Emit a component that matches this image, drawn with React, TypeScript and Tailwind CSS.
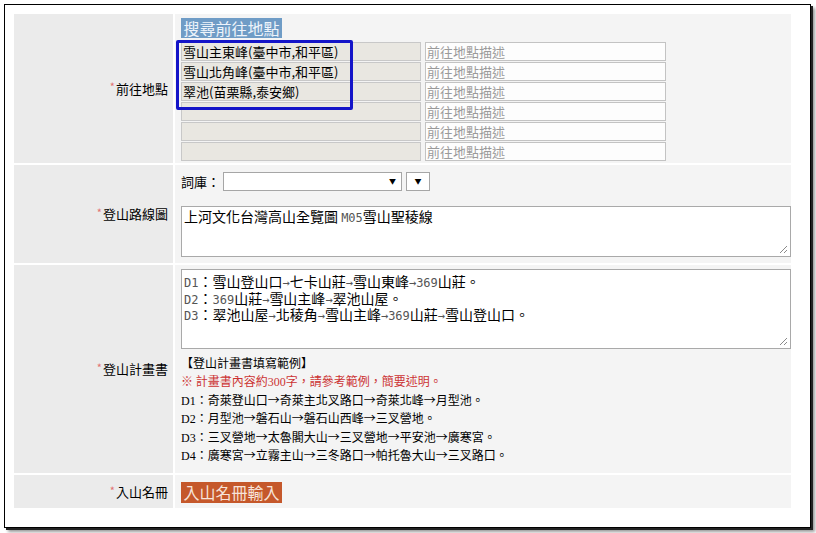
import React from 'react';

const cjk = { fontFamily: '"Noto Sans CJK TC", "Noto Sans", sans-serif' };

// latin bits inside the text boxes render in a thin grey mono face
function Mixed({ t }: { t: string }) {
  const parts = t.split(/([A-Za-z0-9→]+)/);
  return (
    <>
      {parts.map((p, i) =>
        /^[A-Za-z0-9→]+$/.test(p) ? (
          <span key={i} className="text-[12px] text-[#555]" style={{ fontFamily: '"DejaVu Sans Mono", monospace' }}>
            {p}
          </span>
        ) : (
          <span key={i}>{p}</span>
        )
      )}
    </>
  );
}

function Serif({ t }: { t: string }) {
  const parts = t.split(/([A-Za-z0-9]+)/);
  return (
    <>
      {parts.map((p, i) =>
        /^[A-Za-z0-9]+$/.test(p) ? (
          <span key={i} style={{ fontFamily: '"Liberation Serif", serif' }}>
            {p}
          </span>
        ) : (
          <span key={i}>{p}</span>
        )
      )}
    </>
  );
}

function Grip() {
  return (
    <svg className="absolute right-[2px] bottom-[2px]" width="9" height="9" viewBox="0 0 9 9">
      <path d="M1 8 L8 1 M5 8 L8 5" stroke="#8a8a8a" strokeWidth="1" />
    </svg>
  );
}

function Label({ text }: { text: string }) {
  return (
    <div className="bg-[#ebebeb] flex items-center justify-end pr-[5px] text-[13px] text-black">
      <span className="text-[11px] text-[#e27272] relative -top-[2px] mr-[1px]">*</span>
      {text}
    </div>
  );
}

const places = ['雪山主東峰(臺中市,和平區)', '雪山北角峰(臺中市,和平區)', '翠池(苗栗縣,泰安鄉)', '', '', ''];

const plan = [
  'D1：雪山登山口→七卡山莊→雪山東峰→369山莊。',
  'D2：369山莊→雪山主峰→翠池山屋。',
  'D3：翠池山屋→北稜角→雪山主峰→369山莊→雪山登山口。',
];

const sample = [
  'D1：奇萊登山口→奇萊主北叉路口→奇萊北峰→月型池。',
  'D2：月型池→磐石山→磐石山西峰→三叉營地。',
  'D3：三叉營地→太魯閣大山→三叉營地→平安池→廣寒宮。',
  'D4：廣寒宮→立霧主山→三冬路口→帕托魯大山→三叉路口。',
];

export default function App() {
  return (
    <div className="w-[816px] h-[533px] bg-white pt-[4px] pl-[4px]" style={cjk}>
      <div className="w-[807px] h-[524px] border border-black bg-white pl-[9px] pt-[9px] shadow-[2px_2px_0_#222,4px_4px_3px_#999]">
        <div className="w-[777px] grid grid-cols-[159px_616px] gap-[2px]">
          {/* 前往地點 */}
          <Label text="前往地點" />
          <div className="bg-[#f4f4f4] relative pl-[6px] pt-[4px] pb-[2px]">
            <div className="w-[101px] h-[20px] bg-[#6f9cc6] text-[16px] leading-[20px] text-center text-[#eef4fb]">
              搜尋前往地點
            </div>
            <div className="mt-[4px] flex flex-col gap-px">
              {places.map((p, i) => (
                <div key={i} className="flex gap-[4px]">
                  <div className="w-[240px] h-[19px] border border-[#c8c8c8] bg-[#e9e7e1] text-[13px] leading-[17px] px-[1px] text-black whitespace-nowrap overflow-hidden">
                    {p}
                  </div>
                  <div className="w-[241px] h-[19px] border border-[#c3c3c3] bg-[#fdfdfd] text-[13px] leading-[17px] px-[1px] text-[#9a9a9a]">
                    前往地點描述
                  </div>
                </div>
              ))}
            </div>
            <div className="absolute left-[1px] top-[26px] w-[177px] h-[70px] border-[3px] border-[#1414c8] rounded-[2px]" />
          </div>

          {/* 登山路線圖 */}
          <Label text="登山路線圖" />
          <div className="bg-[#f4f4f4] pl-[6px] pt-[7px] pb-[6px]">
            <div className="flex items-center h-[19px] text-[13px] text-black">
              <span className="w-[42px]">詞庫：</span>
              <div className="w-[179px] h-[19px] border border-[#a6a6a6] bg-white flex items-center justify-end pr-[5px]">
                <span className="text-[7px] leading-none">▼</span>
              </div>
              <div className="ml-[4px] w-[24px] h-[19px] border border-[#a6a6a6] bg-white flex items-center justify-center">
                <span className="text-[7px] leading-none">▼</span>
              </div>
            </div>
            <div className="relative mt-[15px] w-[610px] h-[51px] border border-[#a9a9a9] bg-white px-[2px] pt-[1px] text-[14px] leading-[16.5px] text-black">
              <div className="h-[16.5px] whitespace-nowrap">
                <Mixed t="上河文化台灣高山全覽圖 M05雪山聖稜線" />
              </div>
              <Grip />
            </div>
          </div>

          {/* 登山計畫書 */}
          <Label text="登山計畫書" />
          <div className="bg-[#f4f4f4] pl-[6px] pt-[4px] pb-[9px]">
            <div className="relative w-[610px] h-[80px] border border-[#a9a9a9] bg-white px-[2px] pt-[3px] text-[14px] leading-[16.5px] text-black">
              {plan.map((l, i) => (
                <div key={i} className="h-[16.5px] whitespace-nowrap">
                  <Mixed t={l} />
                </div>
              ))}
              <Grip />
            </div>
            <div className="mt-[5px] text-[12px] leading-[18.4px] text-black">
              <div className="h-[18.4px]">【登山計畫書填寫範例】</div>
              <div className="h-[18.4px] text-[#cc3333]">
                <Serif t="※ 計畫書內容約300字，請參考範例，簡要述明。" />
              </div>
              {sample.map((l, i) => (
                <div key={i} className="h-[18.4px] whitespace-nowrap">
                  <Serif t={l} />
                </div>
              ))}
            </div>
          </div>

          {/* 入山名冊 */}
          <Label text="入山名冊" />
          <div className="bg-[#f4f4f4] pl-[6px] pt-[7px] pb-[5px]">
            <div className="w-[101px] h-[21px] bg-[#c5582b] text-[16px] leading-[21px] text-center text-[#f7e4da]">
              入山名冊輸入
            </div>
          </div>
        </div>
      </div>
    </div>
  );
}
